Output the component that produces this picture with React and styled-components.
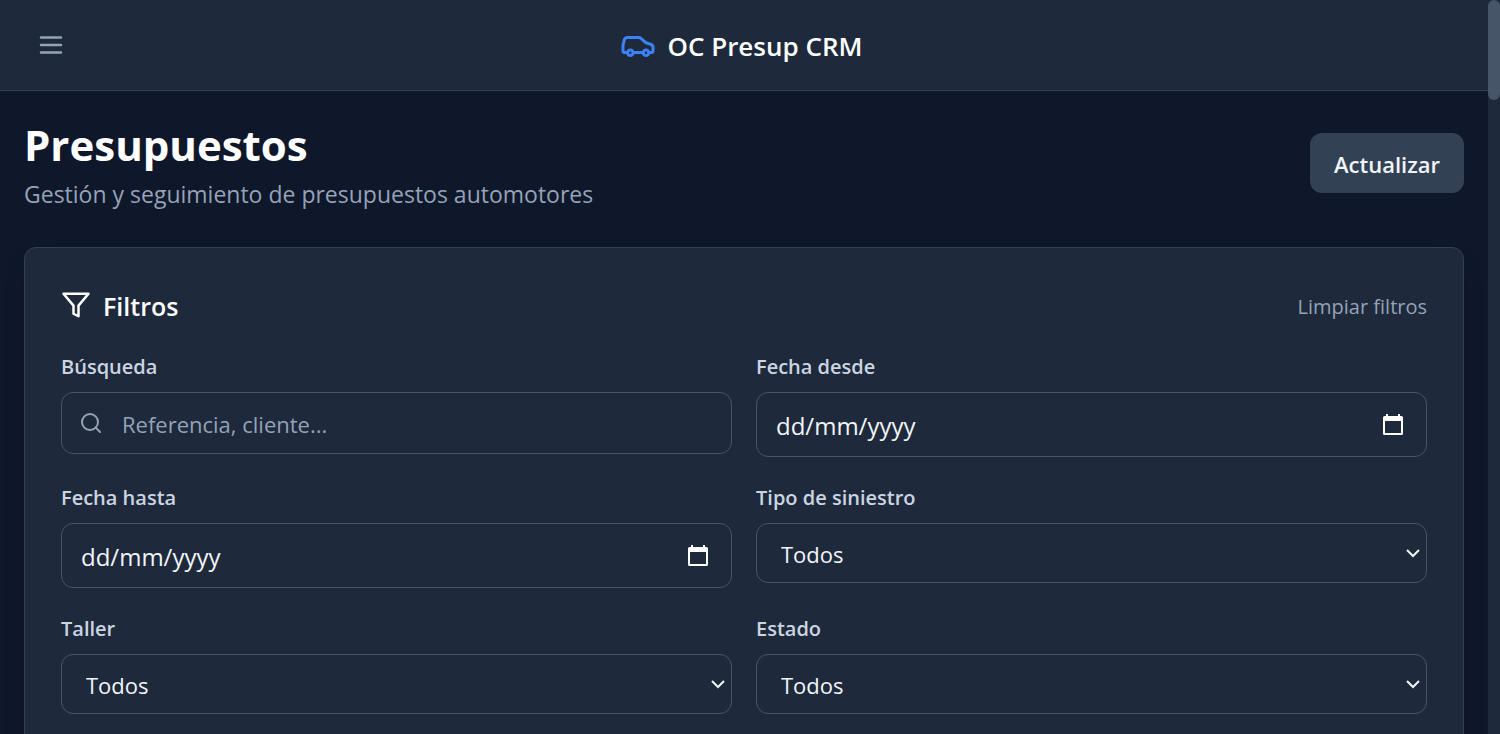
import React from "react";
import styled, { createGlobalStyle } from "styled-components";

const GlobalStyle = createGlobalStyle`
  *, *::before, *::after { box-sizing: border-box; }
  body {
    margin: 0;
    background: #0f172a;
    color: #fff;
    font-family: "Segoe UI", "Open Sans", "Noto Sans", sans-serif;
  }
  button, input, select { font: inherit; color: inherit; }
`;

const Shell = styled.div`
  display: grid;
  grid-template-columns: minmax(0, 1fr) 12px;
  height: 100vh;
`;

const Page = styled.div`
  overflow-y: auto;
  scrollbar-width: none;
`;

const ScrollRail = styled.div`
  background: #1e293b;
`;

const ScrollThumb = styled.div`
  height: 100px;
  border-radius: 6px;
  background: #475569;
`;

const TopBar = styled.header`
  display: flex;
  align-items: center;
  justify-content: space-between;
  padding: 18px 24px;
  background: #1e293b;
  border-bottom: 1px solid #334155;
`;

const IconButton = styled.button`
  display: flex;
  padding: 12px;
  border: 0;
  border-radius: 12px;
  background: none;
  color: #94a3b8;
`;

const Brand = styled.div`
  display: flex;
  align-items: center;
  gap: 12px;
  font-size: 26px;
  line-height: 38px;
  font-weight: 600;
`;

const BrandName = styled.span`
  padding-top: 2px;
`;

const BarSpacer = styled.div`
  width: 60px;
`;

const Content = styled.main`
  padding: 24px;
`;

const PageHead = styled.div`
  display: flex;
  align-items: flex-start;
  justify-content: space-between;
  margin-bottom: 34px;
`;

const Title = styled.h1`
  margin: 0;
  font-size: 42px;
  line-height: 60px;
  font-weight: 700;
`;

const Subtitle = styled.p`
  margin: 0;
  color: #94a3b8;
  font-size: 23px;
  line-height: 38px;
`;

const RefreshButton = styled.button`
  margin-top: 18px;
  padding: 13px 24px 11px;
  border: 0;
  border-radius: 12px;
  background: #334155;
  color: #f1f5f9;
  font-size: 22px;
  line-height: 36px;
  font-weight: 600;
`;

const Card = styled.section`
  padding: 36px;
  border: 1px solid #334155;
  border-radius: 12px;
  background: #1e293b;
  box-shadow: 0 16px 24px -4px rgba(0, 0, 0, 0.2);
`;

const CardHead = styled.div`
  display: flex;
  align-items: center;
  justify-content: space-between;
  margin-bottom: 24px;
`;

const CardTitle = styled.h2`
  display: flex;
  align-items: center;
  gap: 12px;
  margin: 0;
  font-size: 25px;
  line-height: 40px;
  font-weight: 600;
`;

const CardTitleText = styled.span`
  padding-top: 2px;
`;

const ClearButton = styled.button`
  padding: 3px 0 0;
  border: 0;
  background: none;
  color: #94a3b8;
  font-size: 20px;
  line-height: 30px;
`;

const FilterGrid = styled.div`
  display: grid;
  grid-template-columns: 1fr 1fr;
  gap: 24px;
`;

const Field = styled.div`
  display: flex;
  flex-direction: column;
  gap: 9px;
`;

const Label = styled.label`
  color: #cbd5e1;
  font-size: 20px;
  line-height: 33px;
  font-weight: 600;
`;

const ControlBox = styled.div`
  display: flex;
  align-items: center;
  gap: ${(p) => p.$gap || 0}px;
  height: ${(p) => p.$height}px;
  padding: 0 18px ${(p) => (p.$gap ? "0 17px" : "0 19px")};
  border: 1px solid #475569;
  border-radius: 12px;
  color: #94a3b8;
`;

const TextInput = styled.input`
  flex: 1;
  min-width: 0;
  padding: 2px 0 0;
  border: 0;
  outline: 0;
  background: none;
  color: #f1f5f9;
  font-size: ${(p) => p.$size}px;
  line-height: 36px;
  &::placeholder { color: ${(p) => p.$hint}; opacity: 1; }
`;

const PickerButton = styled.button`
  display: flex;
  padding: 3px;
  border: 0;
  background: none;
  color: #fff;
`;

const SelectWrap = styled.div`
  display: grid;
  align-items: center;
  color: #f1f5f9;
  & > * { grid-area: 1 / 1; }
  & > svg { justify-self: end; margin-right: 7px; pointer-events: none; }
`;

const Select = styled.select`
  appearance: none;
  width: 100%;
  height: 60px;
  padding: 2px 24px 0;
  border: 1px solid #475569;
  border-radius: 12px;
  background: #1e293b;
  font-size: 22px;
`;

const MenuIcon = () => (
  <svg width="30" height="30" viewBox="0 0 24 24" fill="none" stroke="currentColor" strokeWidth="2" strokeLinecap="round">
    <path d="M4 6h16M4 12h16M4 18h16" />
  </svg>
);

const CarIcon = () => (
  <svg width="36" height="36" viewBox="0 0 36 36" fill="none" stroke="#3b82f6" strokeWidth="3" strokeLinejoin="round" strokeLinecap="round">
    <path d="M8 25.500H5.500Q4 25.500 4 24V18L5.300 13Q6 10.500 8.500 10.500H19.500Q21 10.500 22.200 11.600L27 15.800L31.500 17.200Q34 18 34 20.500V24Q34 25.500 32.500 25.500H30.500M14.700 25.500H23.500" />
    <circle cx="11.300" cy="25.700" r="2.800" />
    <circle cx="27" cy="25.700" r="2.800" />
  </svg>
);

const FunnelIcon = () => (
  <svg width="30" height="30" viewBox="0 0 24 24" fill="none" stroke="currentColor" strokeWidth="2" strokeLinecap="round" strokeLinejoin="round">
    <path d="M22 3H2l8 9.460V19l4 2v-8.540L22 3z" />
  </svg>
);

const SearchIcon = () => (
  <svg width="24" height="24" viewBox="0 0 24 24" fill="none" stroke="currentColor" strokeWidth="2" strokeLinecap="round">
    <circle cx="11" cy="11" r="8" />
    <path d="M21 21l-4.350-4.350" />
  </svg>
);

const CalendarIcon = () => (
  <svg width="24" height="24" viewBox="0 0 24 24" fill="currentColor">
    <path fillRule="evenodd" d="M5 1h2v2h10V1h2v2h1.500q1.500 0 1.500 1.500v16q0 1.500-1.500 1.500h-17q-1.500 0-1.500-1.500v-16q0-1.500 1.500-1.500H5zM4 8v12h16V8z" />
  </svg>
);

const ChevronIcon = () => (
  <svg width="14" height="10" viewBox="0 0 14 10" fill="none" stroke="currentColor" strokeWidth="2">
    <path d="M1 2l6 6 6-6" />
  </svg>
);

function DateField({ id, label }) {
  return (
    <Field>
      <Label htmlFor={id}>{label}</Label>
      <ControlBox $height={65}>
        <TextInput id={id} type="text" placeholder="dd/mm/yyyy" $hint="#f1f5f9" $size={24} />
        <PickerButton type="button" aria-label={"Elegir " + label.toLowerCase()}>
          <CalendarIcon />
        </PickerButton>
      </ControlBox>
    </Field>
  );
}

function SelectField({ id, label }) {
  return (
    <Field>
      <Label htmlFor={id}>{label}</Label>
      <SelectWrap>
        <Select id={id}>
          <option>Todos</option>
        </Select>
        <ChevronIcon />
      </SelectWrap>
    </Field>
  );
}

export default function App() {
  return (
    <>
      <GlobalStyle />
      <Shell>
        <Page>
          <TopBar>
            <IconButton type="button" aria-label="Abrir menú">
              <MenuIcon />
            </IconButton>
            <Brand>
              <CarIcon />
              <BrandName>OC Presup CRM</BrandName>
            </Brand>
            <BarSpacer />
          </TopBar>
          <Content>
            <PageHead>
              <div>
                <Title>Presupuestos</Title>
                <Subtitle>Gestión y seguimiento de presupuestos automotores</Subtitle>
              </div>
              <RefreshButton type="button">Actualizar</RefreshButton>
            </PageHead>
            <Card>
              <CardHead>
                <CardTitle>
                  <FunnelIcon />
                  <CardTitleText>Filtros</CardTitleText>
                </CardTitle>
                <ClearButton type="button">Limpiar filtros</ClearButton>
              </CardHead>
              <FilterGrid>
                <Field>
                  <Label htmlFor="busqueda">Búsqueda</Label>
                  <ControlBox $height={62} $gap={19}>
                    <SearchIcon />
                    <TextInput id="busqueda" type="text" placeholder="Referencia, cliente..." $hint="#94a3b8" $size={22} />
                  </ControlBox>
                </Field>
                <DateField id="desde" label="Fecha desde" />
                <DateField id="hasta" label="Fecha hasta" />
                <SelectField id="tipo" label="Tipo de siniestro" />
                <SelectField id="taller" label="Taller" />
                <SelectField id="estado" label="Estado" />
              </FilterGrid>
            </Card>
          </Content>
        </Page>
        <ScrollRail>
          <ScrollThumb />
        </ScrollRail>
      </Shell>
    </>
  );
}
